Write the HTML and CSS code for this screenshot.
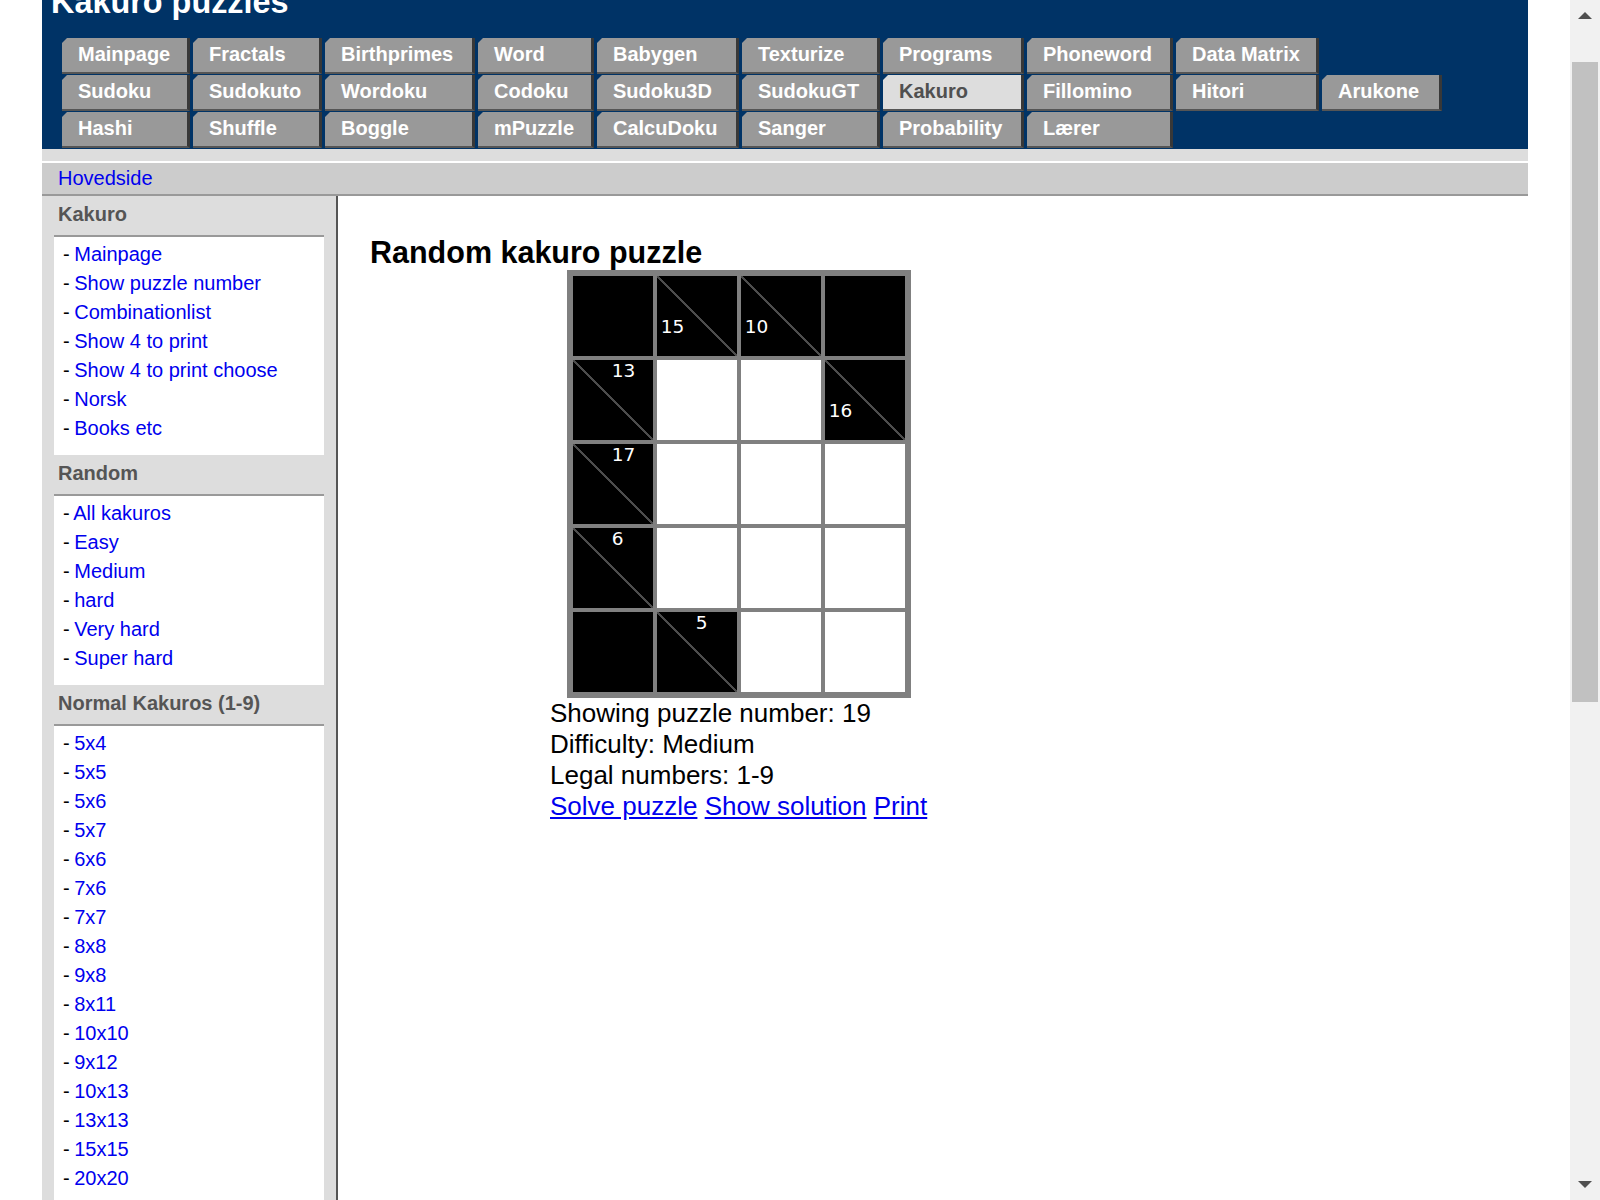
FILE: index.html
```html
<!DOCTYPE html>
<html lang="en">
<head>
<meta charset="utf-8">
<title>Kakuro puzzles</title>
<link rel="stylesheet" href="styles.css">
</head>
<body>
<div class="page">
  <header class="masthead">
    <h1 class="site-title">Kakuro puzzles</h1>
    <nav class="tabs">
      <a class="tab" href="#">Mainpage</a>
      <a class="tab" href="#">Fractals</a>
      <a class="tab" href="#">Birthprimes</a>
      <a class="tab" href="#">Word</a>
      <a class="tab" href="#">Babygen</a>
      <a class="tab" href="#">Texturize</a>
      <a class="tab" href="#">Programs</a>
      <a class="tab" href="#">Phoneword</a>
      <a class="tab" href="#">Data Matrix</a>
      <a class="tab newrow" href="#">Sudoku</a>
      <a class="tab" href="#">Sudokuto</a>
      <a class="tab" href="#">Wordoku</a>
      <a class="tab" href="#">Codoku</a>
      <a class="tab" href="#">Sudoku3D</a>
      <a class="tab" href="#">SudokuGT</a>
      <a class="tab current" href="#">Kakuro</a>
      <a class="tab" href="#">Fillomino</a>
      <a class="tab" href="#">Hitori</a>
      <a class="tab" href="#">Arukone</a>
      <a class="tab newrow" href="#">Hashi</a>
      <a class="tab" href="#">Shuffle</a>
      <a class="tab" href="#">Boggle</a>
      <a class="tab" href="#">mPuzzle</a>
      <a class="tab" href="#">CalcuDoku</a>
      <a class="tab" href="#">Sanger</a>
      <a class="tab" href="#">Probability</a>
      <a class="tab" href="#">Lærer</a>
    </nav>
  </header>
  <div class="band"></div>
  <div class="crumbs"><a href="#">Hovedside</a></div>
  <div class="layout">
    <aside class="sidebar">
      <h3 class="side-head">Kakuro</h3>
      <ul class="side-list">
        <li><span class="dash">-</span> <a href="#">Mainpage</a></li>
        <li><span class="dash">-</span> <a href="#">Show puzzle number</a></li>
        <li><span class="dash">-</span> <a href="#">Combinationlist</a></li>
        <li><span class="dash">-</span> <a href="#">Show 4 to print</a></li>
        <li><span class="dash">-</span> <a href="#">Show 4 to print choose</a></li>
        <li><span class="dash">-</span> <a href="#">Norsk</a></li>
        <li><span class="dash">-</span> <a href="#">Books etc</a></li>
      </ul>
      <h3 class="side-head">Random</h3>
      <ul class="side-list">
        <li><span class="dash">-</span> <a href="#">All kakuros</a></li>
        <li><span class="dash">-</span> <a href="#">Easy</a></li>
        <li><span class="dash">-</span> <a href="#">Medium</a></li>
        <li><span class="dash">-</span> <a href="#">hard</a></li>
        <li><span class="dash">-</span> <a href="#">Very hard</a></li>
        <li><span class="dash">-</span> <a href="#">Super hard</a></li>
      </ul>
      <h3 class="side-head">Normal Kakuros (1-9)</h3>
      <ul class="side-list">
        <li><span class="dash">-</span> <a href="#">5x4</a></li>
        <li><span class="dash">-</span> <a href="#">5x5</a></li>
        <li><span class="dash">-</span> <a href="#">5x6</a></li>
        <li><span class="dash">-</span> <a href="#">5x7</a></li>
        <li><span class="dash">-</span> <a href="#">6x6</a></li>
        <li><span class="dash">-</span> <a href="#">7x6</a></li>
        <li><span class="dash">-</span> <a href="#">7x7</a></li>
        <li><span class="dash">-</span> <a href="#">8x8</a></li>
        <li><span class="dash">-</span> <a href="#">9x8</a></li>
        <li><span class="dash">-</span> <a href="#">8x11</a></li>
        <li><span class="dash">-</span> <a href="#">10x10</a></li>
        <li><span class="dash">-</span> <a href="#">9x12</a></li>
        <li><span class="dash">-</span> <a href="#">10x13</a></li>
        <li><span class="dash">-</span> <a href="#">13x13</a></li>
        <li><span class="dash">-</span> <a href="#">15x15</a></li>
        <li><span class="dash">-</span> <a href="#">20x20</a></li>
        <li><span class="dash">-</span> <a href="#">15x30</a></li>
        <li><span class="dash">-</span> <a href="#">30x30</a></li>
      </ul>
    </aside>
    <main class="content">
      <h2 class="page-title">Random kakuro puzzle</h2>
      <div class="puzzle">
        <div class="kakuro">
          <div class="cell blk"></div>
          <div class="cell clue"><span class="down">15</span></div>
          <div class="cell clue"><span class="down">10</span></div>
          <div class="cell blk"></div>

          <div class="cell clue"><span class="across">13</span></div>
          <div class="cell wht"></div>
          <div class="cell wht"></div>
          <div class="cell clue"><span class="down">16</span></div>

          <div class="cell clue"><span class="across">17</span></div>
          <div class="cell wht"></div>
          <div class="cell wht"></div>
          <div class="cell wht"></div>

          <div class="cell clue"><span class="across">6</span></div>
          <div class="cell wht"></div>
          <div class="cell wht"></div>
          <div class="cell wht"></div>

          <div class="cell blk"></div>
          <div class="cell clue"><span class="across">5</span></div>
          <div class="cell wht"></div>
          <div class="cell wht"></div>
        </div>
        <div class="info">
          <div>Showing puzzle number: 19</div>
          <div>Difficulty: Medium</div>
          <div>Legal numbers: 1-9</div>
          <div class="actions"><a href="#">Solve puzzle</a> <a href="#">Show solution</a> <a href="#">Print</a></div>
        </div>
      </div>
    </main>
  </div>
</div>
<div class="scrollbar" aria-hidden="true">
  <div class="sb-arrow sb-up"></div>
  <div class="sb-thumb"></div>
  <div class="sb-arrow sb-down"></div>
</div>
</body>
</html>
```

FILE: styles.css
```css
html {
  overflow: hidden;
}

body {
  margin: 0;
  background: #fff;
  font-family: "Liberation Sans", Arial, sans-serif;
  color: #000;
}

a {
  color: #0000ee;
  text-decoration: none;
}

.page {
  width: 1486px;
  margin: -28px 0 0 42px;
}

/* ---------- header ---------- */
.masthead {
  background: #003366;
  padding: 10px 0 1px 9px;
}

.site-title {
  margin: 0 0 16px;
  font-size: 32.4px;
  line-height: 40px;
  font-weight: bold;
  color: #fff;
}

.tabs {
  display: grid;
  grid-template-columns: 128px 129px 150px 116px 142px 138px 141px 146px 143px 120px;
  grid-auto-rows: 36px;
  column-gap: 3px;
  row-gap: 1px;
  margin-left: 11px;
}

.tab {
  box-sizing: border-box;
  display: block;
  background: #999;
  border-right: 3px solid #383838;
  border-bottom: 2px solid #555;
  padding-left: 16px;
  color: #fff;
  font-size: 20px;
  font-weight: bold;
  line-height: 33px;
  white-space: nowrap;
  clip-path: polygon(5px 0, 100% 0, 100% 100%, 0 100%, 0 5px);
}

.tab.newrow {
  grid-column-start: 1;
}

.tab.current {
  background: #ddd;
  color: #505050;
}

.band {
  height: 12px;
  background: #ddd;
  margin-bottom: 2px;
}

.crumbs {
  background: #ccc;
  border-bottom: 2px solid #999;
  height: 31px;
  padding-left: 16px;
  font-size: 20px;
  line-height: 30px;
}

/* ---------- layout ---------- */
.layout {
  display: flex;
  align-items: stretch;
  min-height: 1200px;
}

.sidebar {
  width: 294px;
  flex: none;
  background: #ddd;
  border-right: 2px solid #555;
  padding-bottom: 20px;
}

.side-head {
  margin: 0;
  padding: 7px 16px 9px;
  font-size: 20px;
  line-height: 23px;
  font-weight: bold;
  color: #555;
}

.side-list {
  list-style: none;
  margin: 0 12px 0 12px;
  padding: 2.5px 0 12.5px 9px;
  background: #fff;
  border-top: 2px solid #999;
  font-size: 20px;
  line-height: 29px;
}

.dash {
  margin-right: -1px;
}

/* ---------- main ---------- */
.content {
  flex: 1;
  padding-left: 32px;
}

.page-title {
  margin: 39px 0 1px;
  font-size: 30.5px;
  line-height: 34px;
  font-weight: bold;
}

.puzzle {
  display: inline-block;
  margin-left: 180px;
}

.kakuro {
  display: grid;
  grid-template-columns: repeat(4, 80px);
  grid-auto-rows: 80px;
  gap: 4px;
  padding: 6px;
  background: #808080;
  width: max-content;
  margin: 0 auto;
}

.blk {
  background: #000;
}

.wht {
  background: #fff;
}

.clue {
  display: grid;
  grid-template-columns: 39px 41px;
  grid-template-rows: 40px 40px;
  background: linear-gradient(to top right, #000 calc(50% - 0.8px), #4d4d4d calc(50% - 0.8px), #4d4d4d calc(50% + 0.8px), #000 calc(50% + 0.8px));
  color: #fff;
  font-family: "DejaVu Sans", sans-serif;
  font-size: 18.5px;
  line-height: 22px;
}

.clue .across {
  grid-column: 2;
  grid-row: 1;
}

.clue .down {
  grid-column: 1;
  grid-row: 2;
  padding-left: 4px;
  white-space: nowrap;
}

.info {
  font-size: 26px;
  line-height: 31px;
  white-space: nowrap;
}

.actions a {
  text-decoration: underline;
}

/* ---------- painted scrollbar ---------- */
.scrollbar {
  position: fixed;
  top: 0;
  right: 0;
  width: 30px;
  height: 100vh;
  background: #f1f1f1;
}

.sb-thumb {
  position: absolute;
  left: 2px;
  top: 62px;
  width: 26px;
  height: 640px;
  background: #c1c1c1;
}

.sb-arrow {
  position: absolute;
  left: 8px;
  width: 0;
  height: 0;
  border-left: 7px solid transparent;
  border-right: 7px solid transparent;
}

.sb-up {
  top: 12px;
  border-bottom: 7px solid #505050;
}

.sb-down {
  bottom: 12px;
  border-top: 7px solid #505050;
}
```
